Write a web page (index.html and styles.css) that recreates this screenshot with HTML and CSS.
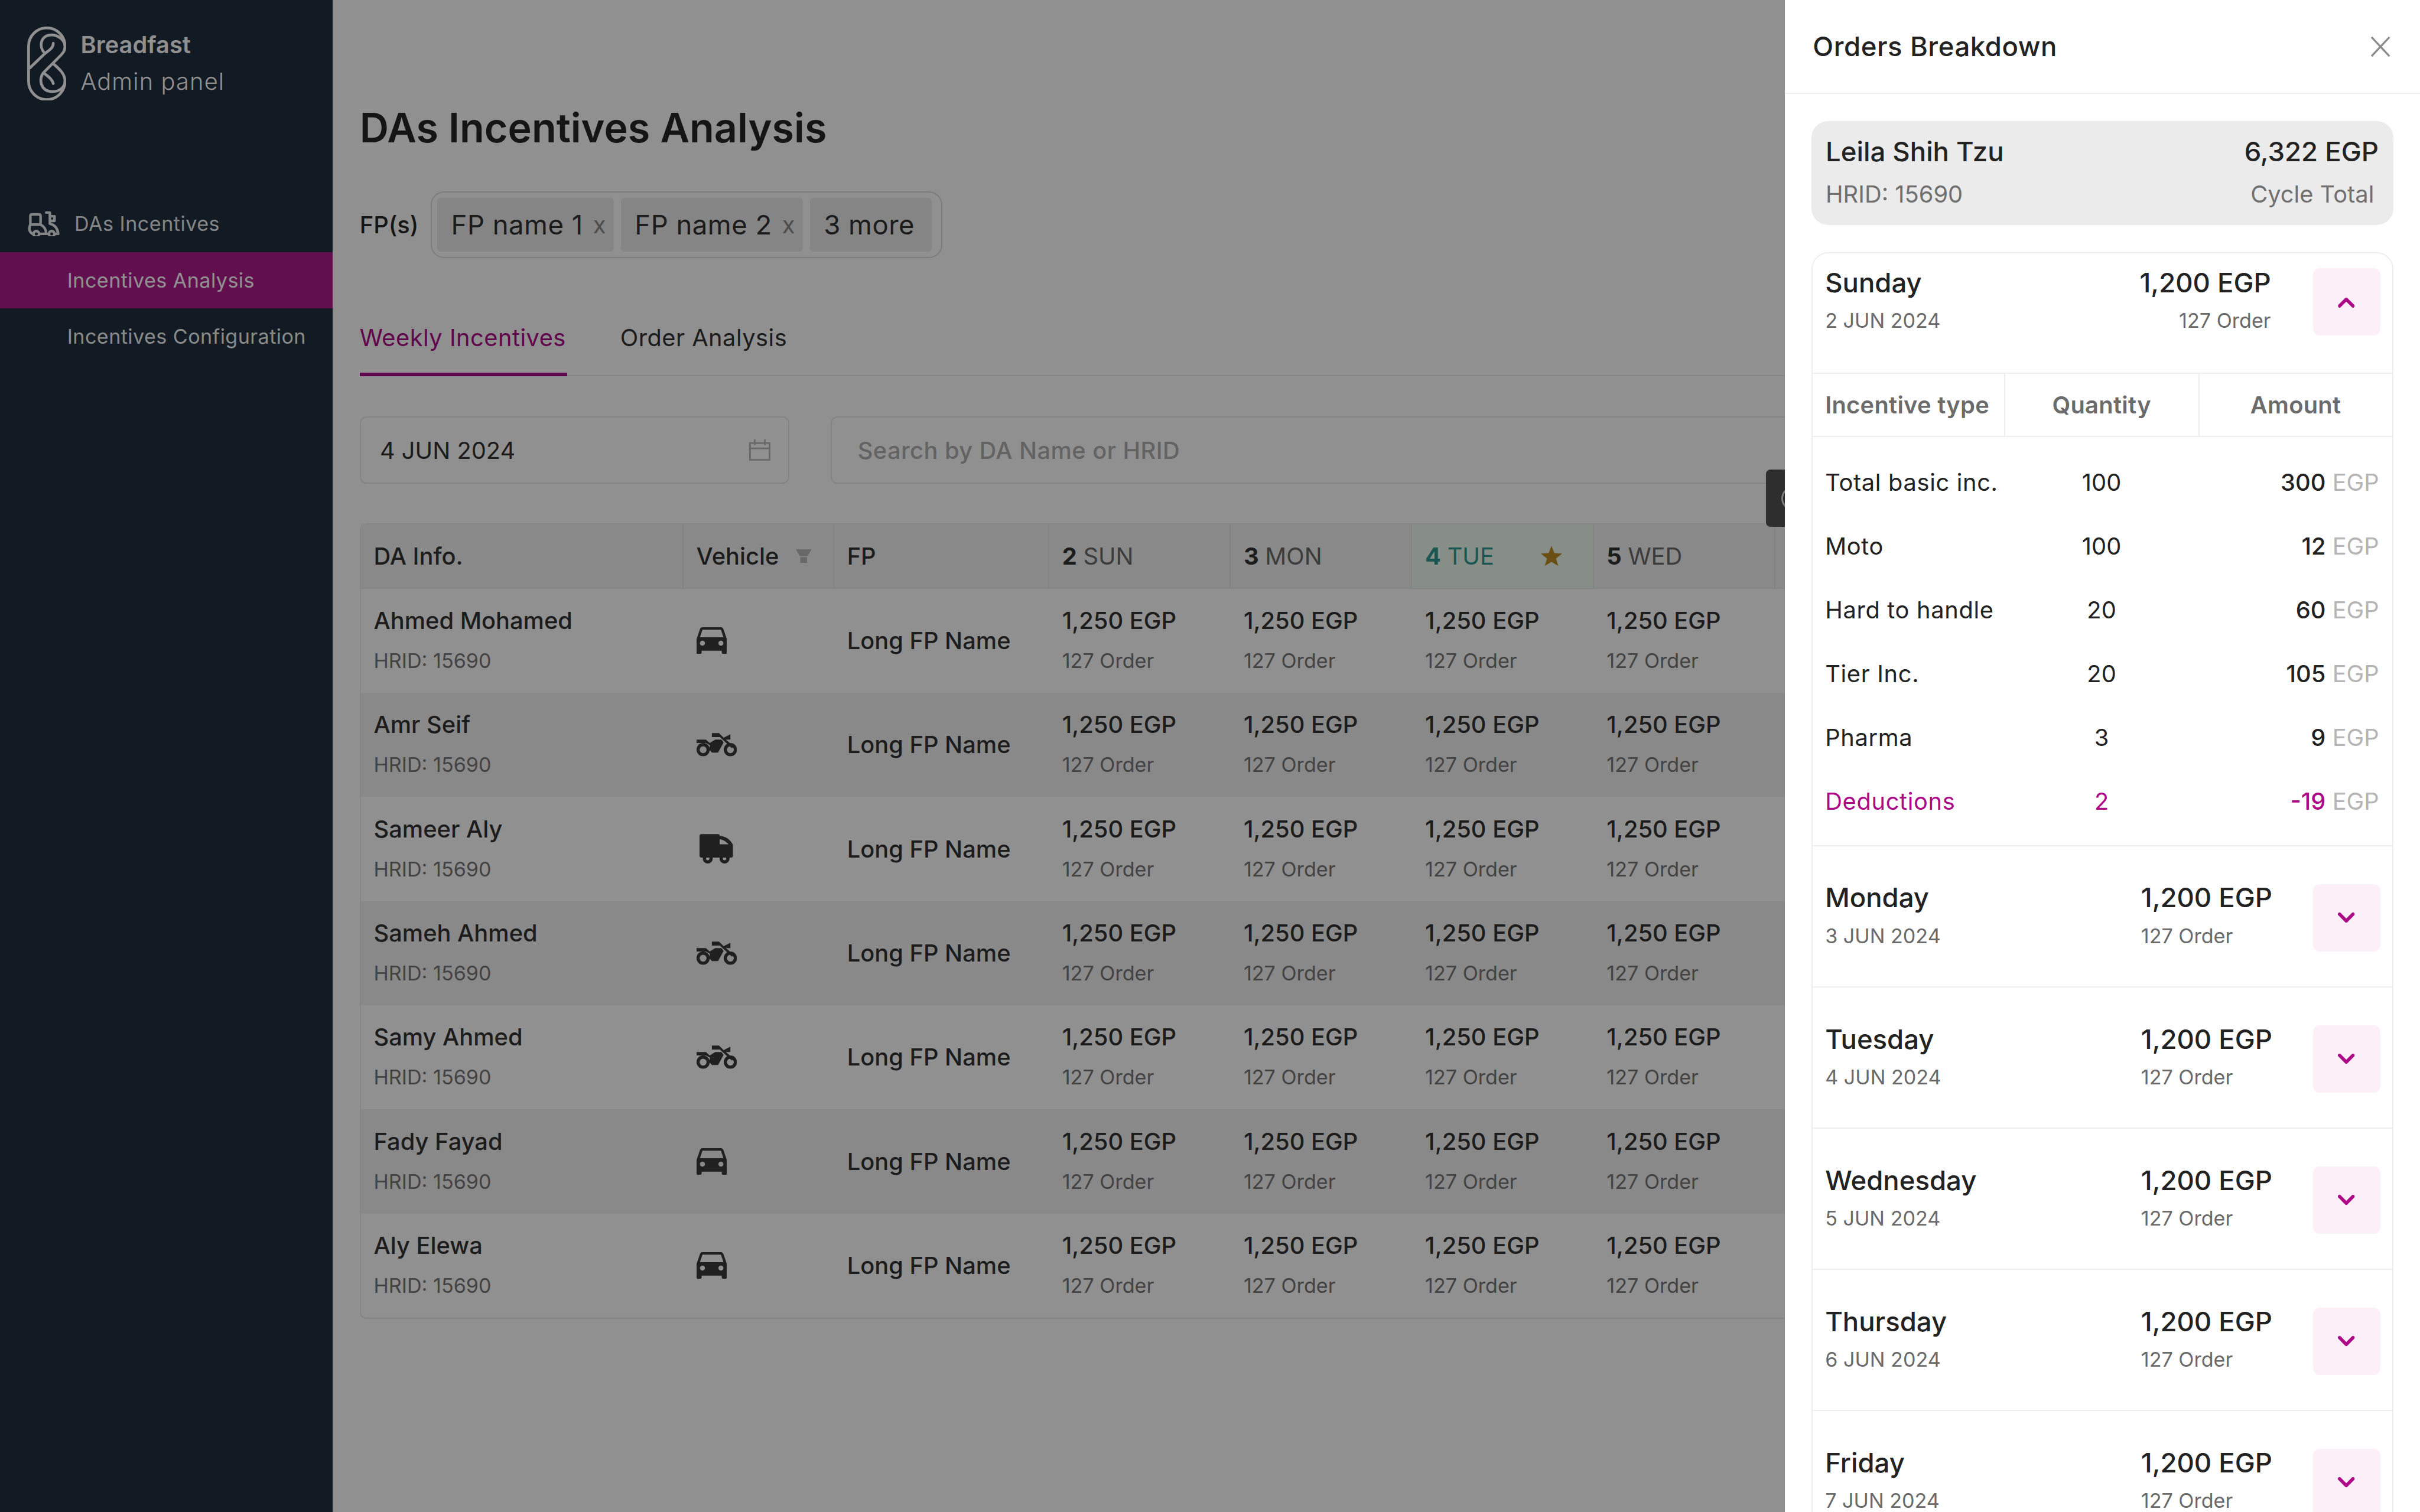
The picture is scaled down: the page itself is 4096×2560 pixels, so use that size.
FILE: index.html
```html
<!DOCTYPE html>
<html lang="en">
  <head>
    <meta charset="UTF-8" />
    <meta name="viewport" content="width=device-width, initial-scale=1.0" />
    <title>Breadfast Admin panel</title>
    <link rel="stylesheet" href="styles.css">
  </head>
  <body>
    <svg class="sprites" width="0" height="0">
      <symbol id="car" viewBox="3 5 18 16">
        <path fill-rule="evenodd" d="M18.92 6.01C18.72 5.42 18.16 5 17.5 5h-11c-.66 0-1.21.42-1.42 1.01L3 12v8c0 .55.45 1 1 1h1c.55 0 1-.45 1-1v-1h12v1c0 .55.45 1 1 1h1c.55 0 1-.45 1-1v-8l-2.08-5.99zM6.5 16c-.83 0-1.5-.67-1.5-1.5S5.67 13 6.5 13s1.5.67 1.5 1.5S7.33 16 6.5 16zm11 0c-.83 0-1.5-.67-1.5-1.5s.67-1.5 1.5-1.5 1.5.67 1.5 1.5-.67 1.5-1.5 1.5zM5 11l1.5-4.5h11L19 11H5z"/>
      </symbol>
      <symbol id="moto" viewBox="275 115 216 125">
        <circle cx="310" cy="204" r="27" fill="none" stroke="currentColor" stroke-width="17"/>
        <circle cx="456" cy="204" r="27" fill="none" stroke="currentColor" stroke-width="17"/>
        <path d="M275 150H325L345 168L375 150H408L420 165L390 220H358L342 205L347 180L325 168H275Z"/>
        <path d="M357 115H395L420 140L456 122V150H432L474 186L464 196L400 137H357Z"/>
      </symbol>
      <symbol id="truck" viewBox="294 662 180 158">
        <path fill-rule="evenodd" d="M304 662H392Q402 662 402 672C435 674 460 692 473 720V778Q473 788 463 788H304Q294 788 294 778V672Q294 662 304 662ZM402 690V717H450C437 703 420 692 402 690Z"/>
        <circle cx="338" cy="793" r="18" fill="none" stroke="currentColor" stroke-width="18"/>
        <circle cx="428" cy="793" r="18" fill="none" stroke="currentColor" stroke-width="18"/>
      </symbol>
      <symbol id="chevron" viewBox="0 0 30 20">
        <path d="M3 3L15 15L27 3" fill="none" stroke="currentColor" stroke-width="6" stroke-linecap="round" stroke-linejoin="round"/>
      </symbol>
    </svg>

    <div class="app">
      <aside class="sidebar">
        <div class="brand">
          <svg class="brand-logo" viewBox="145 80 210 398" fill="none" stroke="currentColor" stroke-width="15" stroke-linecap="round">
            <path d="M152 290V185A98 98 0 0 1 348 185C348 213 335 225 320 240L232 328C205 360 215 430 280 430C320 430 348 405 348 375C348 335 320 310 285 280"/>
            <path d="M152 290V375A98 98 0 0 0 348 375"/>
            <path d="M160 302L240 225C265 205 285 195 285 170"/>
            <path d="M240 225C205 190 215 125 275 125C310 125 345 150 348 185"/>
            <path d="M240 335C262 350 280 365 285 387"/>
          </svg>
          <div class="brand-text">
            <div class="brand-name">Breadfast</div>
            <div class="brand-sub">Admin panel</div>
          </div>
        </div>
        <nav class="nav">
          <div class="nav-head">
            <svg class="nav-icon" viewBox="26 26 172 136" fill="none" stroke="currentColor" stroke-width="14" stroke-linecap="round" stroke-linejoin="round">
              <path d="M40 100V55Q40 45 50 45H85Q95 45 95 55V100Z"/>
              <path d="M40 100Q25 130 50 150"/>
              <path d="M95 100Q125 115 125 150H90"/>
              <path d="M125 150H138"/>
              <path d="M125 35H145V95Q185 105 190 150H172"/>
              <path d="M148 55H170V80H148"/>
              <circle cx="72" cy="150" r="15"/>
              <circle cx="155" cy="150" r="15"/>
            </svg>
            <span>DAs Incentives</span>
          </div>
          <a class="nav-item active">Incentives Analysis</a>
          <a class="nav-item">Incentives Configuration</a>
        </nav>
      </aside>

      <main class="main">
        <h1 class="page-title">DAs Incentives Analysis</h1>

        <div class="fp-row">
          <span class="fp-label">FP(s)</span>
          <div class="fp-box">
            <span class="chip">FP name 1 <i class="chip-x">x</i></span>
            <span class="chip">FP name 2 <i class="chip-x">x</i></span>
            <span class="chip">3 more</span>
          </div>
        </div>

        <div class="tabs">
          <a class="tab active">Weekly Incentives</a>
          <a class="tab">Order Analysis</a>
        </div>

        <div class="search-row">
          <div class="field date-field">
            <span>4 JUN 2024</span>
            <svg class="cal-icon" viewBox="0 0 38 38" fill="none" stroke="currentColor" stroke-width="3">
              <rect x="1.5" y="6.5" width="35" height="30"/>
              <path d="M1.5 16H36.5M10 0V10M28 0V10"/>
            </svg>
          </div>
          <div class="field search-field">Search by DA Name or HRID</div>
        </div>

        <div class="table-wrap">
          <table class="da-table">
            <thead>
              <tr>
                <th class="col-info">DA Info.</th>
                <th class="col-vehicle">
                  <div class="th-flex">Vehicle
                    <svg class="filter-icon" viewBox="0 0 28 25"><path d="M0 0H28L21 12H7ZM8 14H20V25H8Z"/></svg>
                  </div>
                </th>
                <th class="col-fp">FP</th>
                <th class="col-day"><b>2</b> <span>SUN</span></th>
                <th class="col-day"><b>3</b> <span>MON</span></th>
                <th class="col-day today">
                  <div class="th-flex"><div><b>4</b> <span>TUE</span></div>
                    <svg class="star-icon" viewBox="0 0 38 36"><path d="M19 0L24 13L38 14L27 23L31 36L19 29L7 36L11 23L0 14L14 13Z"/></svg>
                  </div>
                </th>
                <th class="col-day"><b>5</b> <span>WED</span></th>
                <th class="col-day"></th>
              </tr>
            </thead>
            <tbody>
              <tr>
                <td><div class="stack"><div class="strong">Ahmed Mohamed</div><div class="sub">HRID: 15690</div></div></td>
                <td><svg class="veh veh-car"><use href="#car"/></svg></td>
                <td class="strong">Long FP Name</td>
                <td><div class="stack"><div class="strong">1,250 EGP</div><div class="sub">127 Order</div></div></td>
                <td><div class="stack"><div class="strong">1,250 EGP</div><div class="sub">127 Order</div></div></td>
                <td><div class="stack"><div class="strong">1,250 EGP</div><div class="sub">127 Order</div></div></td>
                <td><div class="stack"><div class="strong">1,250 EGP</div><div class="sub">127 Order</div></div></td>
                <td></td>
              </tr>
              <tr>
                <td><div class="stack"><div class="strong">Amr Seif</div><div class="sub">HRID: 15690</div></div></td>
                <td><svg class="veh veh-moto"><use href="#moto"/></svg></td>
                <td class="strong">Long FP Name</td>
                <td><div class="stack"><div class="strong">1,250 EGP</div><div class="sub">127 Order</div></div></td>
                <td><div class="stack"><div class="strong">1,250 EGP</div><div class="sub">127 Order</div></div></td>
                <td><div class="stack"><div class="strong">1,250 EGP</div><div class="sub">127 Order</div></div></td>
                <td><div class="stack"><div class="strong">1,250 EGP</div><div class="sub">127 Order</div></div></td>
                <td></td>
              </tr>
              <tr>
                <td><div class="stack"><div class="strong">Sameer Aly</div><div class="sub">HRID: 15690</div></div></td>
                <td><svg class="veh veh-truck"><use href="#truck"/></svg></td>
                <td class="strong">Long FP Name</td>
                <td><div class="stack"><div class="strong">1,250 EGP</div><div class="sub">127 Order</div></div></td>
                <td><div class="stack"><div class="strong">1,250 EGP</div><div class="sub">127 Order</div></div></td>
                <td><div class="stack"><div class="strong">1,250 EGP</div><div class="sub">127 Order</div></div></td>
                <td><div class="stack"><div class="strong">1,250 EGP</div><div class="sub">127 Order</div></div></td>
                <td></td>
              </tr>
              <tr>
                <td><div class="stack"><div class="strong">Sameh Ahmed</div><div class="sub">HRID: 15690</div></div></td>
                <td><svg class="veh veh-moto"><use href="#moto"/></svg></td>
                <td class="strong">Long FP Name</td>
                <td><div class="stack"><div class="strong">1,250 EGP</div><div class="sub">127 Order</div></div></td>
                <td><div class="stack"><div class="strong">1,250 EGP</div><div class="sub">127 Order</div></div></td>
                <td><div class="stack"><div class="strong">1,250 EGP</div><div class="sub">127 Order</div></div></td>
                <td><div class="stack"><div class="strong">1,250 EGP</div><div class="sub">127 Order</div></div></td>
                <td></td>
              </tr>
              <tr>
                <td><div class="stack"><div class="strong">Samy Ahmed</div><div class="sub">HRID: 15690</div></div></td>
                <td><svg class="veh veh-moto"><use href="#moto"/></svg></td>
                <td class="strong">Long FP Name</td>
                <td><div class="stack"><div class="strong">1,250 EGP</div><div class="sub">127 Order</div></div></td>
                <td><div class="stack"><div class="strong">1,250 EGP</div><div class="sub">127 Order</div></div></td>
                <td><div class="stack"><div class="strong">1,250 EGP</div><div class="sub">127 Order</div></div></td>
                <td><div class="stack"><div class="strong">1,250 EGP</div><div class="sub">127 Order</div></div></td>
                <td></td>
              </tr>
              <tr>
                <td><div class="stack"><div class="strong">Fady Fayad</div><div class="sub">HRID: 15690</div></div></td>
                <td><svg class="veh veh-car"><use href="#car"/></svg></td>
                <td class="strong">Long FP Name</td>
                <td><div class="stack"><div class="strong">1,250 EGP</div><div class="sub">127 Order</div></div></td>
                <td><div class="stack"><div class="strong">1,250 EGP</div><div class="sub">127 Order</div></div></td>
                <td><div class="stack"><div class="strong">1,250 EGP</div><div class="sub">127 Order</div></div></td>
                <td><div class="stack"><div class="strong">1,250 EGP</div><div class="sub">127 Order</div></div></td>
                <td></td>
              </tr>
              <tr>
                <td><div class="stack"><div class="strong">Aly Elewa</div><div class="sub">HRID: 15690</div></div></td>
                <td><svg class="veh veh-car"><use href="#car"/></svg></td>
                <td class="strong">Long FP Name</td>
                <td><div class="stack"><div class="strong">1,250 EGP</div><div class="sub">127 Order</div></div></td>
                <td><div class="stack"><div class="strong">1,250 EGP</div><div class="sub">127 Order</div></div></td>
                <td><div class="stack"><div class="strong">1,250 EGP</div><div class="sub">127 Order</div></div></td>
                <td><div class="stack"><div class="strong">1,250 EGP</div><div class="sub">127 Order</div></div></td>
                <td></td>
              </tr>
            </tbody>
          </table>
          <div class="side-tag"><span class="side-tag-ring"></span></div>
        </div>
      </main>

      <div class="overlay"></div>

      <aside class="drawer">
        <header class="drawer-head">
          <span class="drawer-title">Orders Breakdown</span>
          <svg class="close-icon" viewBox="0 0 34 36" fill="none" stroke="currentColor" stroke-width="3.5"><path d="M1 1L33 35M33 1L1 35"/></svg>
        </header>
        <div class="drawer-body">
          <div class="summary">
            <div class="summary-row">
              <span class="big">Leila Shih Tzu</span>
              <span class="big">6,322 EGP</span>
            </div>
            <div class="summary-row muted">
              <span>HRID: 15690</span>
              <span class="cycle">Cycle Total</span>
            </div>
          </div>

          <div class="days">
            <section class="day open">
              <div class="day-head">
                <div class="day-name">
                  <div class="big">Sunday</div>
                  <div class="small">2 JUN 2024</div>
                </div>
                <div class="day-total right">
                  <div class="big">1,200 EGP</div>
                  <div class="small">127 Order</div>
                </div>
                <button class="toggle"><svg class="chevron up"><use href="#chevron"/></svg></button>
              </div>
              <div class="inc-head">
                <div>Incentive type</div>
                <div>Quantity</div>
                <div>Amount</div>
              </div>
              <div class="inc-rows">
                <div class="inc-row"><span>Total basic inc.</span><span class="qty">100</span><span class="amt"><b>300</b> <em>EGP</em></span></div>
                <div class="inc-row"><span>Moto</span><span class="qty">100</span><span class="amt"><b>12</b> <em>EGP</em></span></div>
                <div class="inc-row"><span>Hard to handle</span><span class="qty">20</span><span class="amt"><b>60</b> <em>EGP</em></span></div>
                <div class="inc-row"><span>Tier Inc.</span><span class="qty">20</span><span class="amt"><b>105</b> <em>EGP</em></span></div>
                <div class="inc-row"><span>Pharma</span><span class="qty">3</span><span class="amt"><b>9</b> <em>EGP</em></span></div>
                <div class="inc-row minus"><span>Deductions</span><span class="qty">2</span><span class="amt"><b>-19</b> <em>EGP</em></span></div>
              </div>
            </section>

            <section class="day">
              <div class="day-head">
                <div class="day-name"><div class="big">Monday</div><div class="small">3 JUN 2024</div></div>
                <div class="day-total"><div class="big">1,200 EGP</div><div class="small">127 Order</div></div>
                <button class="toggle"><svg class="chevron"><use href="#chevron"/></svg></button>
              </div>
            </section>
            <section class="day">
              <div class="day-head">
                <div class="day-name"><div class="big">Tuesday</div><div class="small">4 JUN 2024</div></div>
                <div class="day-total"><div class="big">1,200 EGP</div><div class="small">127 Order</div></div>
                <button class="toggle"><svg class="chevron"><use href="#chevron"/></svg></button>
              </div>
            </section>
            <section class="day">
              <div class="day-head">
                <div class="day-name"><div class="big">Wednesday</div><div class="small">5 JUN 2024</div></div>
                <div class="day-total"><div class="big">1,200 EGP</div><div class="small">127 Order</div></div>
                <button class="toggle"><svg class="chevron"><use href="#chevron"/></svg></button>
              </div>
            </section>
            <section class="day">
              <div class="day-head">
                <div class="day-name"><div class="big">Thursday</div><div class="small">6 JUN 2024</div></div>
                <div class="day-total"><div class="big">1,200 EGP</div><div class="small">127 Order</div></div>
                <button class="toggle"><svg class="chevron"><use href="#chevron"/></svg></button>
              </div>
            </section>
            <section class="day">
              <div class="day-head">
                <div class="day-name"><div class="big">Friday</div><div class="small">7 JUN 2024</div></div>
                <div class="day-total"><div class="big">1,200 EGP</div><div class="small">127 Order</div></div>
                <button class="toggle"><svg class="chevron"><use href="#chevron"/></svg></button>
              </div>
            </section>
          </div>
        </div>
      </aside>
    </div>
  </body>
</html>
```
FILE: styles.css
```css
/* Sizes are taken from the 4320x2700 design, zoom brings them to the window */
html,
body {
  margin: 0;
  padding: 0;
  overflow: hidden;
}

body {
  zoom: 0.94815;
  font-family: Inter, "Open Sans", sans-serif;
  color: #333;
}

.sprites {
  position: absolute;
}

.app {
  position: relative;
  display: flex;
  width: 4320px;
  height: 2700px;
  overflow: hidden;
  background: #fff;
}

/* Sidebar */
.sidebar {
  flex: 0 0 594px;
  background: #202e40;
  color: #fff;
}

.brand {
  display: flex;
  gap: 26px;
  align-items: center;
  padding: 47px 0 0 48px;
}

.brand-logo {
  width: 70px;
  height: 132px;
}

.brand-name {
  font-size: 42px;
  line-height: 66px;
  font-weight: 600;
}

.brand-sub {
  font-size: 42px;
  line-height: 66px;
  font-weight: 300;
  letter-spacing: 1.2px;
}

.nav {
  margin-top: 170px;
}

.nav-head {
  display: flex;
  align-items: center;
  gap: 26px;
  height: 101px;
  padding-left: 50px;
  font-size: 36px;
  letter-spacing: 0.5px;
  opacity: 0.9;
}

.nav-icon {
  width: 57px;
  height: 45px;
}

.nav-item {
  display: block;
  height: 101px;
  line-height: 101px;
  padding-left: 120px;
  font-size: 36px;
  letter-spacing: 0.45px;
  opacity: 0.95;
}

.nav-item.active {
  background: #ae1b8c;
  opacity: 1;
}

/* Main */
.main {
  flex: 1;
  min-width: 0;
  padding-left: 48px;
  overflow: hidden;
}

.page-title {
  margin: 187px 0 0;
  font-size: 72px;
  line-height: 84px;
  font-weight: 600;
  color: #262626;
}

.fp-row {
  display: flex;
  align-items: center;
  gap: 22px;
  margin-top: 71px;
}

.fp-label {
  font-size: 42px;
  font-weight: 500;
  color: #262626;
}

.fp-box {
  display: flex;
  gap: 12px;
  align-items: center;
  height: 119px;
  box-sizing: border-box;
  padding: 0 17px 0 9px;
  border: 3px solid #dcdcdc;
  border-radius: 24px;
}

.chip {
  display: flex;
  align-items: center;
  height: 96px;
  padding: 0 14px 0 25px;
  border-radius: 6px;
  background: #ececec;
  font-size: 48px;
  letter-spacing: 0.5px;
  white-space: pre;
}

.chip:last-child {
  padding-right: 30px;
}

.chip-x {
  margin-left: 4px;
  font-style: normal;
  font-size: 42px;
  color: #888;
}

.tabs {
  display: flex;
  gap: 95px;
  height: 133px;
  box-sizing: border-box;
  margin-top: 78px;
  border-bottom: 3px solid #eee;
}

.tab {
  height: 133px;
  box-sizing: border-box;
  padding: 40px 2px 0 0;
  font-size: 42px;
  line-height: 48px;
  letter-spacing: 0.5px;
}

.tab.active {
  color: #ad0a87;
  border-bottom: 7px solid #ad0a87;
}

.search-row {
  display: flex;
  gap: 74px;
  margin-top: 72px;
}

.field {
  display: flex;
  align-items: center;
  height: 120px;
  box-sizing: border-box;
  border: 3px solid #eaeaea;
  border-radius: 12px;
  font-size: 42px;
}

.date-field {
  flex: 0 0 767px;
  justify-content: space-between;
  padding: 0 32px 0 34px;
}

.cal-icon {
  width: 38px;
  height: 38px;
  color: #bbb;
}

.search-field {
  flex: 1;
  padding-left: 46px;
  color: #b0b0b0;
  font-weight: 500;
  letter-spacing: 0.45px;
}

.table-wrap {
  position: relative;
  margin-top: 71px;
}

.da-table {
  table-layout: fixed;
  width: 2850px;
  border-collapse: separate;
  border-spacing: 0;
  border: 3px solid #ebebeb;
  border-radius: 12px 0 0 12px;
}

.da-table th {
  height: 114px;
  padding: 0 23px;
  box-sizing: border-box;
  background: #f3f3f3;
  border-right: 3px solid #e8e8e8;
  border-bottom: 3px solid #ececec;
  font-size: 42px;
  font-weight: 500;
  text-align: left;
}

.da-table th span {
  font-weight: 400;
  color: #6a6a6a;
}

.da-table th b {
  font-weight: 700;
}

.col-info {
  width: 576px;
}

.col-vehicle {
  width: 269px;
}

.col-fp {
  width: 384px;
}

.col-day {
  width: 324px;
}

.th-flex {
  display: flex;
  align-items: center;
  justify-content: space-between;
  padding-right: 15px;
}

.filter-icon {
  width: 28px;
  height: 25px;
  fill: #b8b8b8;
}

.da-table th.today {
  background: #edfcf0;
  color: #2f9b92;
}

.da-table th.today span {
  color: #2f9b92;
}

.today .th-flex {
  padding-right: 31px;
}

.star-icon {
  width: 38px;
  height: 36px;
  fill: #bc8a20;
}

.da-table td {
  height: 186px;
  padding: 0 23px;
  box-sizing: border-box;
  font-size: 42px;
}

.da-table tbody tr:nth-child(even) td {
  background: #f3f3f3;
}

.stack {
  padding-bottom: 6px;
}

.strong {
  font-weight: 500;
  line-height: 54px;
}

.sub {
  margin-top: 24px;
  font-size: 36px;
  line-height: 42px;
  color: #777;
}

.veh {
  display: block;
  color: #3a3a3a;
  fill: currentColor;
}

.veh-car {
  width: 54px;
  height: 48px;
}

.veh-moto {
  width: 72px;
  height: 42px;
}

.veh-truck {
  width: 60px;
  height: 53px;
  margin-left: 6px;
}

.side-tag {
  position: absolute;
  top: -96px;
  left: 2511px;
  width: 60px;
  height: 102px;
  border-radius: 8px 0 0 8px;
  background: #525252;
}

.side-tag-ring {
  position: absolute;
  top: 30px;
  left: 27px;
  width: 36px;
  height: 36px;
  border: 4px solid #ddd;
  border-radius: 50%;
}

.overlay {
  position: absolute;
  top: 0;
  left: 0;
  right: 0;
  bottom: 0;
  background: rgba(0, 0, 0, 0.435);
}

/* Drawer */
.drawer {
  position: absolute;
  top: 0;
  right: 0;
  bottom: 0;
  width: 1134px;
  background: #fff;
  color: #222;
  overflow: hidden;
}

.drawer-head {
  display: flex;
  align-items: center;
  justify-content: space-between;
  height: 168px;
  box-sizing: border-box;
  padding: 0 54px 0 50px;
  border-bottom: 3px solid #f0f0f0;
}

.drawer-title {
  font-size: 48px;
  font-weight: 500;
  letter-spacing: 0.6px;
}

.close-icon {
  width: 34px;
  height: 36px;
  color: #8c8c8c;
}

.drawer-body {
  padding: 48px 48px 0;
}

.summary {
  height: 186px;
  box-sizing: border-box;
  padding: 26px 26px 0 25px;
  border-radius: 30px;
  background: #ebebeb;
}

.summary-row {
  display: flex;
  justify-content: space-between;
  line-height: 60px;
}

.summary-row.muted {
  margin-top: 15px;
  font-size: 42px;
  color: #707070;
}

.cycle {
  margin-right: 8px;
}

.big {
  font-size: 48px;
  line-height: 60px;
  font-weight: 500;
}

.small {
  margin-top: 16px;
  font-size: 36px;
  line-height: 42px;
  color: #6a6a6a;
}

.days {
  margin-top: 48px;
  border: 3px solid #eee;
  border-radius: 30px 30px 0 0;
}

.day {
  border-top: 3px solid #eee;
}

.day:first-child {
  border-top: 0;
}

.day-head {
  display: flex;
  align-items: flex-start;
  height: 250px;
  box-sizing: border-box;
  padding: 68px 21px 0 22px;
}

.day.open .day-head {
  height: 213px;
  padding-top: 27px;
}

.day-name {
  flex: 1;
}

.day-total {
  width: 232px;
  margin-right: 75px;
  white-space: nowrap;
}

.day-total.right {
  width: auto;
  text-align: right;
}

.day-name,
.day-total {
  margin-top: -5px;
}

.day.open .day-name,
.day.open .day-total {
  margin-top: -3px;
}

.toggle {
  width: 120px;
  height: 120px;
  padding: 0;
  border: 0;
  border-radius: 12px;
  background: #fdeff7;
  color: #ad0a87;
}

.chevron {
  display: block;
  width: 30px;
  height: 20px;
  margin: 0 auto;
}

.chevron.up {
  transform: rotate(180deg);
}

.inc-head {
  display: grid;
  grid-template-columns: 341px 347px 1fr;
  height: 115px;
  box-sizing: border-box;
  border-top: 3px solid #eee;
  border-bottom: 3px solid #eee;
  font-size: 42px;
  font-weight: 600;
  letter-spacing: 0.3px;
  color: #6b6b6b;
}

.inc-head div {
  display: flex;
  align-items: center;
  justify-content: center;
  border-left: 3px solid #eee;
}

.inc-head div:first-child {
  justify-content: flex-start;
  padding-left: 22px;
  border-left: 0;
}

.inc-rows {
  padding: 24px 23px 21px 22px;
}

.inc-row {
  display: grid;
  grid-template-columns: 320px 347px 1fr;
  align-items: center;
  height: 114px;
  font-size: 42px;
}

.inc-row span:first-child {
  letter-spacing: 0.7px;
  white-space: nowrap;
}

.qty {
  text-align: center;
}

.amt {
  text-align: right;
}

.amt b {
  font-weight: 500;
}

.amt em {
  font-style: normal;
  color: #b5b5b5;
}

.minus {
  color: #ad0a87;
}
```
